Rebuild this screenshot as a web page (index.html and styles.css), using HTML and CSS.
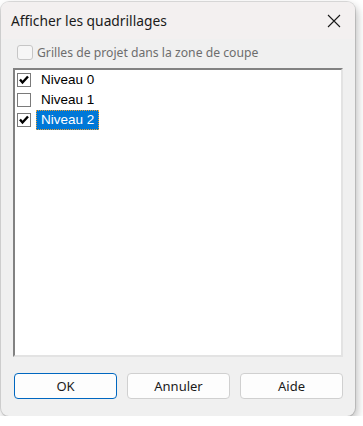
FILE: index.html
```html
<!DOCTYPE html>
<html lang="fr">
<head>
    <meta charset="UTF-8">
    <meta name="viewport" content="width=device-width, initial-scale=1.0">
    <title>Afficher les quadrillages</title>
    <link rel="stylesheet" href="styles.css">
</head>
<body>
    <div class="window">
        <div class="titlebar">
            <span class="title">Afficher les quadrillages</span>
            <span class="close">
                <svg width="14" height="14" viewBox="0 0 14 14">
                    <path d="M1 1 L13 13 M13 1 L1 13" stroke="#1a1a1a" stroke-width="1.1" fill="none"/>
                </svg>
            </span>
        </div>

        <div class="content">
            <label class="option disabled">
                <span class="round-box"></span>
                <span>Grilles de projet dans la zone de coupe</span>
            </label>

            <div class="listbox">
                <div class="item">
                    <svg class="check" width="14" height="14" viewBox="0 0 14 14">
                        <rect x="0.5" y="0.5" width="13" height="13" fill="#fff" stroke="#7a7a7a"/>
                        <path d="M3 6.5 L5.5 9.5 L11 3.5" stroke="#000" stroke-width="2.4" fill="none"/>
                    </svg>
                    <span class="name">Niveau 0</span>
                </div>
                <div class="item">
                    <svg class="check" width="14" height="14" viewBox="0 0 14 14">
                        <rect x="0.5" y="0.5" width="13" height="13" fill="#fff" stroke="#7a7a7a"/>
                    </svg>
                    <span class="name">Niveau 1</span>
                </div>
                <div class="item">
                    <svg class="check" width="14" height="14" viewBox="0 0 14 14">
                        <rect x="0.5" y="0.5" width="13" height="13" fill="#fff" stroke="#7a7a7a"/>
                        <path d="M3 6.5 L5.5 9.5 L11 3.5" stroke="#000" stroke-width="2.4" fill="none"/>
                    </svg>
                    <span class="name selected">Niveau 2</span>
                </div>
            </div>

            <div class="buttons">
                <button class="btn default">OK</button>
                <button class="btn">Annuler</button>
                <button class="btn">Aide</button>
            </div>
        </div>
    </div>
</body>
</html>
```

FILE: styles.css
```css
body {
    margin: 0;
    background-color: #ffffff;
    font-family: "Noto Sans", sans-serif;
}

.window {
    margin: 2px 0 0 1px;
    width: 354px;
    height: 414px;
    border-radius: 8px;
    background-color: #f0f0f0;
    box-shadow: 0 0 0 1px rgba(0, 0, 0, 0.12), 2px 4px 10px rgba(0, 0, 0, 0.28);
    display: flex;
    flex-direction: column;
    overflow: hidden;
}

.titlebar {
    height: 37px;
    background-color: #f3f0f0;
    display: flex;
    align-items: center;
    justify-content: space-between;
    padding: 0 14px 0 10px;
}

.title {
    font-size: 13.8px;
    color: #1a1a1a;
}

.close {
    display: flex;
    margin-top: 1px;
}

.content {
    flex: 1;
    display: flex;
    flex-direction: column;
    padding: 6px 12px 0 12px;
}

.option {
    display: flex;
    align-items: center;
    gap: 4px;
    height: 15px;
    padding-left: 4px;
    font-size: 12.2px;
}

.option.disabled {
    color: #6d6d6d;
}

.round-box {
    width: 14px;
    height: 13px;
    border: 1px solid #c6c6c6;
    border-radius: 3px;
    background-color: #f6f6f6;
}

.listbox {
    margin-top: 8px;
    width: 326px;
    height: 285px;
    background-color: #ffffff;
    border-top: 2px solid #828282;
    border-left: 2px solid #828282;
    border-right: 2px solid #e3e3e3;
    border-bottom: 2px solid #e3e3e3;
    font-family: "Liberation Sans", Arial, sans-serif;
    font-size: 13.5px;
}

.item {
    height: 20px;
    display: flex;
    align-items: center;
    padding-left: 2px;
}

.check {
    flex-shrink: 0;
}

.name {
    margin-left: 5px;
    padding: 1px 4px 2px;
    color: #000000;
    border: 1px solid transparent;
}

.name.selected {
    background-color: #0078d7;
    color: #ffffff;
    border: 1px dotted #f0a030;
}

.buttons {
    margin-top: 16px;
    display: flex;
    justify-content: space-between;
    padding-left: 1px;
}

.btn {
    width: 103px;
    height: 26px;
    background-color: #fdfdfd;
    border: 1px solid #d0d0d0;
    border-radius: 4px;
    font-family: "Noto Sans", sans-serif;
    font-size: 13px;
    color: #1a1a1a;
    padding: 0;
}

.btn.default {
    border-color: #0067c0;
}
```
